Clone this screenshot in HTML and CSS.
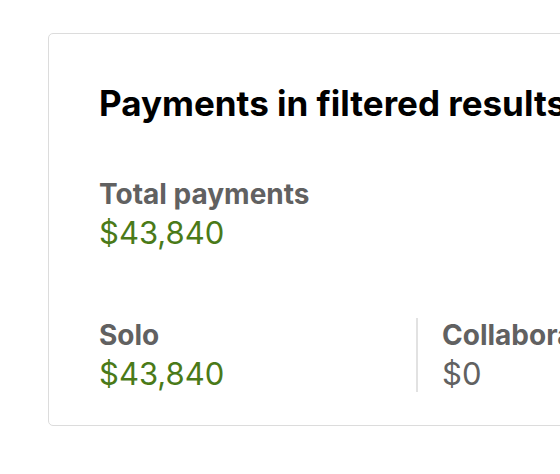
FILE: index.html
```html
<!DOCTYPE html>
<html lang="en">
<head>
<meta charset="utf-8">
<title>Payments</title>
<link rel="stylesheet" href="styles.css">
</head>
<body>
<section class="card">
  <h2 class="title">Payments in filtered results</h2>
  <div class="stat total">
    <div class="label">Total payments</div>
    <div class="value green">$43,840</div>
  </div>
  <div class="split">
    <div class="stat col">
      <div class="label">Solo</div>
      <div class="value green">$43,840</div>
    </div>
    <div class="stat col divided">
      <div class="label">Collaborative</div>
      <div class="value">$0</div>
    </div>
  </div>
</section>
</body>
</html>
```
FILE: styles.css
```css
html, body {
  margin: 0;
  padding: 0;
  background: #fff;
  overflow: hidden;
}
body {
  padding: 33px 0 0 48px;
  font-family: Inter, "Liberation Sans", sans-serif;
  width: 560px;
  height: 474px;
  box-sizing: border-box;
}
.card {
  width: 700px;
  box-sizing: border-box;
  border: 1px solid #dcdcdc;
  border-radius: 5px;
  padding: 48px 0 33px 50px;
}
.title {
  margin: 0;
  font-size: 35px;
  line-height: 42px;
  font-weight: 700;
  color: #000;
  white-space: nowrap;
}
.stat {
  display: flex;
  flex-direction: column;
}
.total {
  margin-top: 53px;
}
.label {
  font-size: 28px;
  line-height: 34px;
  font-weight: 700;
  color: #616161;
  white-space: nowrap;
}
.value {
  margin-top: 4px;
  font-size: 31px;
  line-height: 36px;
  font-weight: 400;
  color: #616161;
}
.green {
  color: #4a7a18;
}
.split {
  display: flex;
  margin-top: 67px;
}
.col {
  width: 317px;
  box-sizing: border-box;
}
.col.divided {
  border-left: 2px solid #e2e2e2;
  padding-left: 24px;
}
```
